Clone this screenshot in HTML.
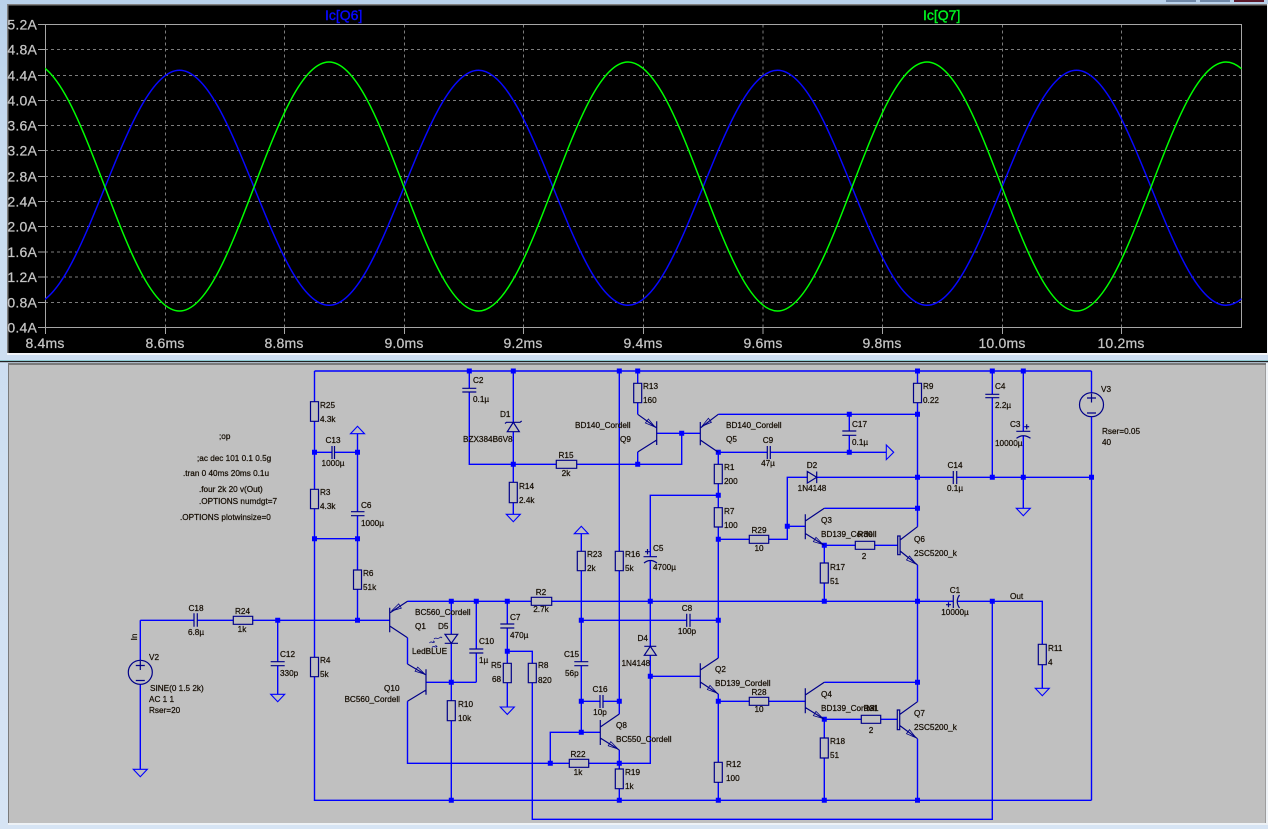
<!DOCTYPE html>
<html><head><meta charset="utf-8"><style>
html,body{margin:0;padding:0;background:#c5d9ee;width:1268px;height:829px;overflow:hidden}
svg{display:block;position:absolute;left:0;top:0}
.ax{font:14px "Liberation Sans",sans-serif;fill:#c4c4c4;stroke:#c4c4c4;stroke-width:.25px;letter-spacing:.2px}
.s text{font:8.2px "Liberation Sans",sans-serif;fill:#140c02;stroke:#140c02;stroke-width:.22px}
.m{text-anchor:middle}
.e{text-anchor:end}
</style></head><body>
<svg width="1268" height="829" viewBox="0 0 1268 829" xmlns="http://www.w3.org/2000/svg">
<defs>
<linearGradient id="bg" x1="0" y1="0" x2="0" y2="1"><stop offset="0" stop-color="#b9d1ea"/><stop offset=".2" stop-color="#c9dcf0"/><stop offset="1" stop-color="#d6e4f4"/></linearGradient>
<clipPath id="pc"><rect x="45" y="24" width="1196.5" height="304"/></clipPath>
</defs>
<rect width="1268" height="829" fill="url(#bg)"/>
<rect x="1166" y="0" width="30" height="2" fill="#7088a8"/><rect x="1200" y="0" width="30" height="2" fill="#7088a8"/><rect x="1234" y="0" width="30" height="2" fill="#5c1a2c"/>
<rect x="7" y="4" width="1261" height="351" fill="#f2f5f9"/>
<rect x="7" y="4" width="1260" height="349" fill="#808080"/>
<rect x="8.5" y="5.5" width="1258.5" height="347.5" fill="#000"/>
<!-- grid -->
<path d="M45 49.5H1241M45 75.5H1241M45 100.5H1241M45 125.5H1241M45 150.5H1241M45 176.5H1241M45 201.5H1241M45 226.5H1241M45 252H1241M45 277H1241M45 302.5H1241M165.5 24.5V327.5M284.5 24.5V327.5M404.5 24.5V327.5M523.5 24.5V327.5M643.5 24.5V327.5M763 24.5V327.5M882.5 24.5V327.5M1002.5 24.5V327.5M1121.5 24.5V327.5" stroke="#7c7c7c" stroke-width="1" stroke-dasharray="3 3" fill="none"/>
<rect x="45.5" y="24.5" width="1196" height="303" fill="none" stroke="#a6a6a6" stroke-width="1"/>
<path d="M38 24.5h7M38 49.5h7M38 75.5h7M38 100.5h7M38 125.5h7M38 150.5h7M38 176.5h7M38 201.5h7M38 226.5h7M38 252h7M38 277h7M38 302.5h7M38 327.5h7M45.5 327v7M165.5 327v7M284.5 327v7M404.5 327v7M523.5 327v7M643.5 327v7M763 327v7M882.5 327v7M1002.5 327v7M1121.5 327v7" stroke="#a6a6a6" fill="none"/>
<g clip-path="url(#pc)" fill="none" stroke-width="1.5">
<path stroke="#0808ff" d="M30 305.25c27.05 0 50.37 -57.3 74.75 -117.5c24.38 -60.2 47.7 -117.5 74.75 -117.5c27.05 0 50.37 57.3 74.75 117.5c24.38 60.2 47.7 117.5 74.75 117.5c27.05 0 50.37 -57.3 74.75 -117.5c24.38 -60.2 47.7 -117.5 74.75 -117.5c27.05 0 50.37 57.3 74.75 117.5c24.38 60.2 47.7 117.5 74.75 117.5c27.05 0 50.37 -57.3 74.75 -117.5c24.38 -60.2 47.7 -117.5 74.75 -117.5c27.05 0 50.37 57.3 74.75 117.5c24.38 60.2 47.7 117.5 74.75 117.5c27.05 0 50.37 -57.3 74.75 -117.5c24.38 -60.2 47.7 -117.5 74.75 -117.5c27.05 0 50.37 57.3 74.75 117.5c24.38 60.2 47.7 117.5 74.75 117.5c27.05 0 50.37 -57.3 74.75 -117.5"/>
<path stroke="#00ff00" d="M30 62c27.05 0 50.37 60.7 74.75 124.5c24.38 63.8 47.7 124.5 74.75 124.5c27.05 0 50.37 -60.7 74.75 -124.5c24.38 -63.8 47.7 -124.5 74.75 -124.5c27.05 0 50.37 60.7 74.75 124.5c24.38 63.8 47.7 124.5 74.75 124.5c27.05 0 50.37 -60.7 74.75 -124.5c24.38 -63.8 47.7 -124.5 74.75 -124.5c27.05 0 50.37 60.7 74.75 124.5c24.38 63.8 47.7 124.5 74.75 124.5c27.05 0 50.37 -60.7 74.75 -124.5c24.38 -63.8 47.7 -124.5 74.75 -124.5c27.05 0 50.37 60.7 74.75 124.5c24.38 63.8 47.7 124.5 74.75 124.5c27.05 0 50.37 -60.7 74.75 -124.5c24.38 -63.8 47.7 -124.5 74.75 -124.5c27.05 0 50.37 60.7 74.75 124.5"/>
</g>
<g class="ax e">
<text x="37" y="29.5">5.2A</text><text x="37" y="54.5">4.8A</text><text x="37" y="80.5">4.4A</text><text x="37" y="105.5">4.0A</text><text x="37" y="130.5">3.6A</text><text x="37" y="155.5">3.2A</text><text x="37" y="181.5">2.8A</text><text x="37" y="206.5">2.4A</text><text x="37" y="231.5">2.0A</text><text x="37" y="257">1.6A</text><text x="37" y="282">1.2A</text><text x="37" y="307.5">0.8A</text><text x="37" y="332.5">0.4A</text>
</g>
<g class="ax m">
<text x="45" y="348">8.4ms</text><text x="165" y="348">8.6ms</text><text x="284" y="348">8.8ms</text><text x="404" y="348">9.0ms</text><text x="523" y="348">9.2ms</text><text x="643" y="348">9.4ms</text><text x="763" y="348">9.6ms</text><text x="882" y="348">9.8ms</text><text x="1002" y="348">10.0ms</text><text x="1121" y="348">10.2ms</text>
</g>
<text x="325" y="20" style="font:14px 'Liberation Sans',sans-serif;fill:#0808ff;stroke:#0808ff;stroke-width:.4px">Ic[Q6]</text>
<text x="923" y="20" style="font:14px 'Liberation Sans',sans-serif;fill:#00f020;stroke:#00f020;stroke-width:.4px">Ic[Q7]</text>

<rect x="0" y="360" width="1268" height="1" fill="#8cc8d0"/><rect x="0" y="361" width="1268" height="1.2" fill="#222"/>
<rect x="8" y="363" width="1260" height="462" fill="#eef2f6"/>
<rect x="8" y="363" width="1258" height="460" fill="#7a7a7a"/>
<rect x="9" y="365" width="1256.5" height="458" fill="#c0c0c0"/>

<g style="filter:blur(.25px)" class="s">
<!-- wires -->
<path fill="none" stroke="#0000ff" stroke-width="1.4" d="M314.5 371H1091.5M314.5 371V401.7M314.5 421.3V489.3M314.5 508.7V657.3M314.5 676.7V800.3H1091.5
M314.5 452.3H332M334.5 452.3H357.5M357.5 433.7V511.7M357.5 515.7V570M357.5 589.3V620.3M314.5 538.7H357.5
M140.3 620.3H194M197.3 620.3H233.3M252.7 620.3H389.7M140.3 620.3V660.3M140.3 684.3V769.3M277.7 620.3V661.7M277.7 665.7V694.3
M407.5 601.3H531.3M551.7 601.3H953.3M957 601.3H1042.3V644.3M1042.3 664.7V688.3M407.5 637.7V664
M451.3 601.3V634.3M451.3 643.3V700.7M451.3 720.7V800.3M476.3 601.3V649M476.3 653V682.3M426 682.3H476.3
M507.3 601.3V624M507.3 628V663.3M507.3 682.7V707M507.3 651.3H532.3V663.3M532.3 682.7V819.3H992.3V601.3
M407.5 701.3V763.3H569.3M588.7 763.3H650.3V655.3M650.3 646.3V560M650.3 556.7V495.3H718.3M619.3 750V769M619.3 788.7V800.3
M550.3 763.3V732.3H600.3M581.3 533.7V551.3M581.3 570.7V661.7M581.3 665.7V732.3M581.3 620.3H686.7M690 620.3H718.3M581.3 701.3H600M603 701.3H619.3
M619.3 371V551.3M619.3 570.7V714M650.3 676.3H700.3
M718.3 452.3V464.3M718.3 483.7V507.7M718.3 527V658M718.3 694V762.3M718.3 782.3V800.3
M718.3 539.3H749.3M768.7 539.3H787.3V477.3H807M816.7 477.3H953.3M956.7 477.3H1091.5M787.3 526.3H805.3M718.3 701.3H749.3M768.7 701.3H805.3
M824.3 508.3H917.5M824.3 545.3H855.3M874.7 545.3H897.7M824.3 545.3V563M824.3 583V601.3M824.3 682.3H917.5M824.3 719.3H861.3M880.7 719.3H897.3M824.3 719.3V738M824.3 758V800.3
M917.5 371V383.3M917.5 402.7V526.7M917.5 565V701.7M917.5 738.7V800.3M718.3 414.3H917.5M718.3 452.3H767.3M770.3 452.3H886.3M849.3 414.3V431M849.3 435.3V452.3
M992.3 371V394.3M992.3 397.7V477.3M1023.3 371V431.3M1023.3 435.7V508.3M1091.5 371V392.7M1091.5 416.7V800.3
M656.7 433.3H700.3M681.7 433.3V464.3H576.7M556.3 464.3H469.3V392M469.3 388.3V371M637.7 371V383.3M637.7 402.7V414.3M637.7 452V464.3
M513.3 371V422.3M513.3 431.7V482.3M513.3 502.7V514.3"/>
<!-- junctions -->
<path fill="none" stroke="#0000ff" stroke-width="5" stroke-linecap="square" d="M469.3 371h0M513.3 371h0M619.3 371h0M637.7 371h0M917.5 371h0M992.3 371h0M1023.3 371h0M314.5 452.3h0M357.5 452.3h0M314.5 538.7h0M357.5 538.7h0M357.5 620.3h0M277.7 620.3h0M451.3 601.3h0M476.3 601.3h0M507.3 601.3h0M650.3 601.3h0M824.3 601.3h0M917.5 601.3h0M992.3 601.3h0M451.3 682.3h0M507.3 651.3h0M581.3 620.3h0M718.3 620.3h0M581.3 701.3h0M619.3 701.3h0M581.3 732.3h0M550.3 763.3h0M619.3 763.3h0M650.3 676.3h0M718.3 701.3h0M451.3 800.3h0M619.3 800.3h0M718.3 800.3h0M824.3 800.3h0M917.5 800.3h0M513.3 464.3h0M637.7 464.3h0M681.7 433.3h0M718.3 452.3h0M718.3 495.3h0M718.3 539.3h0M849.3 414.3h0M917.5 414.3h0M849.3 452.3h0M787.3 526.3h0M917.5 477.3h0M992.3 477.3h0M1023.3 477.3h0M1091.5 477.3h0M917.5 508.3h0M824.3 545.3h0M824.3 719.3h0M917.5 682.3h0"/>
<!-- grounds -->
<path fill="none" stroke="#0000ff" stroke-width="1.1" d="M133.3 769.3h14l-7 7.4zM270.7 694.3h14l-7 7.4zM500.3 707h14l-7 7.4zM506.3 514.3h14l-7 7.4zM1016.3 508.3h14l-7 7.4zM1035.3 688.3h14l-7 7.4zM350.5 433.7h14l-7 -7.4zM574.3 533.7h14l-7 -7.4zM886.3 445v14.6l7.4 -7.3z"/>
<!-- components -->
<path fill="none" stroke="#000088" stroke-width="1.2" d="M310.5 401.7h8v19.6h-8zM310.5 489.3h8v19.4h-8zM310.5 657.3h8v19.4h-8zM353.5 570h8v19.3h-8zM1038.3 644.3h8v20.4h-8zM528.3 663.3h8v19.4h-8zM503.3 663.3h8v19.4h-8zM447.3 700.7h8v20h-8zM615.3 769h8v19.7h-8zM714.3 762.3h8v20h-8zM615.3 551.3h8v19.4h-8zM577.3 551.3h8v19.4h-8zM714.3 464.3h8v19.4h-8zM714.3 507.7h8v19.3h-8zM633.7 383.3h8v19.4h-8zM913.5 383.3h8v19.4h-8zM509.3 482.3h8v20.4h-8zM820.3 563h8v20h-8zM820.3 738h8v20h-8z
M233.3 616.3h19.4v8h-19.4zM531.3 597.3h20.4v8h-20.4zM569.3 759.3h19.4v8h-19.4zM556.3 460.3h20.4v8h-20.4zM749.3 535.3h19.4v8h-19.4zM855.3 541.3h19.4v8h-19.4zM749.3 697.3h19.4v8h-19.4zM861.3 715.3h19.4v8h-19.4z
M194 613.3v13.4M197.3 613.3v13.4M332 446v13M334.5 446v13M351 511.7h13.5M351 515.7h13.5M270.7 661.7h14M270.7 665.7h14M469.3 649h14M469.3 653h14M500.3 624h14M500.3 628h14M574.3 661.7h14M574.3 665.7h14M600 695v13M603 695v13M686.7 613.7v13.2M690 613.7v13.2M767.3 446v13M770.3 446v13M842.3 431h14M842.3 435.3h14M462.3 388.3h14M462.3 392h14M985.3 394.3h14M985.3 397.7h14M953.3 471v13M956.7 471v13
M643.5 556.7h13.5M644 563q6.3 -5 13 0M1016.3 431.3h14M1016.5 438.3q6.8 -5 14 0M953.3 595v13M959.5 595q-4.5 6.5 0 13M645 551.7h5M647.5 549v5.4M1024.2 426.7h5M1026.7 424.2v5M946 604.7h5M948.5 602.2v5
M389.7 607.7v24.6M389.7 613L407.5 601.3M389.7 626L407.5 637.7M426 669.3v25.4M407.5 664L426 675M426 690L407.5 701.3M600.3 720v25M600.3 727L619.3 714M600.3 738L619.3 750M700.3 663.3v25M700.3 670L718.3 658M700.3 682L718.3 694
M656.7 421.3v23.7M637.7 414.3L656.7 428M656.7 440L637.7 452M700.3 422v23.3M718.3 414.3L700.3 428M700.3 440L718.3 452.3
M805.3 514.3v25M805.3 521L824.3 508.3M805.3 533.5L824.3 545.3M805.3 688.3v25M805.3 695L824.3 682.3M805.3 707.5L824.3 719.3
M897.7 536h2.4v18.7h-2.4zM900.1 540L917.5 526.7M900.1 551L917.5 565M897.3 710h2.4v19.7h-2.4zM899.7 714.5L917.5 701.7M899.7 725.5L917.5 738.7
M505 423.5L506.5 422.3H520L521.7 421M507.3 431.7h12l-6 -9.4zM644.3 646.3h12M644.3 655.3h12l-6 -9zM444.7 643.3h13.3M445 634.3h12.7l-6.4 9zM807.3 471.5v11.6l9.4 -5.8zM816.7 471.5v11.6"/>
<path fill="none" stroke="#000088" stroke-width=".8" d="M391.5 611L401.3 608.1L398.7 603.9zM425 674.3L415.1 671.3L417.7 667.1zM618 749L608.2 745.8L610.8 741.6zM717 693L707.4 689.6L710 685.4zM655 427L645.4 423L648.4 419zM702 426.3L711.4 422.3L708.4 418.3zM823 544.5L813.4 541.6L816 537.4zM823 718.5L813.4 715.6L816 711.4zM916 564L906.5 560L909.5 556zM916 737.7L906.5 733.7L909.5 729.7z
M429.5 643c2 -3 3 1 5 -1l-1.5 -1.2M432 647.5c2 -3 3 1 5 -1l-1.5 -1.2M434 639c2 -2.5 3 1 6 -1.5c1 -.8 1.5 -.4 2 .5"/>
<circle cx="140.3" cy="672.3" r="12" fill="none" stroke="#000088" stroke-width="1.2"/>
<circle cx="1091.5" cy="404.7" r="12" fill="none" stroke="#000088" stroke-width="1.2"/>
<path fill="none" stroke="#000088" stroke-width="1.2" d="M135.8 665.5h9M140.3 661v9M135.8 680.5h9M1087 398h9M1091.5 393.5v9M1087 413h9"/>
<!-- labels -->
<text x="320" y="408">R25</text><text x="320" y="422">4.3k</text>
<text x="333" y="443" class="m">C13</text><text x="333" y="466" class="m">1000µ</text>
<text x="320" y="495">R3</text><text x="320" y="509">4.3k</text>
<text x="361" y="508">C6</text><text x="361" y="526">1000µ</text>
<text x="363" y="576">R6</text><text x="363" y="590">51k</text>
<text x="320" y="663">R4</text><text x="320" y="677">5k</text>
<text x="196" y="611" class="m">C18</text><text x="196" y="635" class="m">6.8µ</text>
<text x="242.5" y="614" class="m">R24</text><text x="242" y="632" class="m">1k</text>
<text x="280" y="657">C12</text><text x="280" y="676">330p</text>
<text transform="translate(137,637) rotate(-90)" class="m">In</text>
<text x="149" y="660">V2</text>
<text x="150" y="691">SINE(0 1.5 2k)</text><text x="149" y="702">AC 1 1</text><text x="149" y="713">Rser=20</text>
<text x="399.5" y="691" class="e">Q10</text><text x="400" y="702" class="e">BC560_Cordell</text>
<text x="415" y="615">BC560_Cordell</text><text x="415" y="629">Q1</text><text x="438" y="629">D5</text><text x="412" y="654">LedBLUE</text>
<text x="479" y="644">C10</text><text x="479" y="663">1µ</text>
<text x="510" y="620">C7</text><text x="510" y="638">470µ</text>
<text x="491" y="668">R5</text><text x="492" y="682">68</text>
<text x="538" y="668">R8</text><text x="538" y="683">820</text>
<text x="541" y="595" class="m">R2</text><text x="541" y="612" class="m">2.7k</text>
<text x="564" y="657">C15</text><text x="565" y="676">56p</text>
<text x="600" y="692" class="m">C16</text><text x="600" y="715" class="m">10p</text>
<text x="687" y="611" class="m">C8</text><text x="687" y="634" class="m">100p</text>
<text x="637.5" y="641">D4</text><text x="621.5" y="666">1N4148</text>
<text x="715" y="672">Q2</text><text x="715" y="686">BD139_Cordell</text>
<text x="616" y="728">Q8</text><text x="616" y="742">BC550_Cordell</text>
<text x="578" y="757" class="m">R22</text><text x="578" y="775" class="m">1k</text>
<text x="625" y="775">R19</text><text x="625" y="789">1k</text>
<text x="458" y="707">R10</text><text x="458" y="721">10k</text>
<text x="726" y="767">R12</text><text x="726" y="781">100</text>
<text x="759" y="695" class="m">R28</text><text x="759" y="712" class="m">10</text>
<text x="821" y="697">Q4</text><text x="821" y="711">BD139_Cordell</text>
<text x="871" y="711" class="m">R31</text><text x="871" y="733" class="m">2</text>
<text x="914" y="716">Q7</text><text x="914" y="730">2SC5200_k</text>
<text x="830" y="744">R18</text><text x="830" y="758">51</text>
<text x="955" y="593" class="m">C1</text><text x="955" y="615" class="m">10000µ</text>
<text x="1010" y="599">Out</text>
<text x="1048" y="651">R11</text><text x="1048" y="665">4</text>
<text x="473" y="383">C2</text><text x="473" y="402">0.1µ</text>
<text x="500" y="417">D1</text><text x="463" y="442">BZX384B6V8</text>
<text x="566" y="458" class="m">R15</text><text x="566" y="476" class="m">2k</text>
<text x="519" y="489">R14</text><text x="519" y="503">2.4k</text>
<text x="575" y="428">BD140_Cordell</text><text x="620" y="442">Q9</text>
<text x="643" y="389">R13</text><text x="643" y="403">160</text>
<text x="726" y="428">BD140_Cordell</text><text x="726" y="442">Q5</text>
<text x="724" y="470">R1</text><text x="724" y="484">200</text>
<text x="724" y="514">R7</text><text x="724" y="528">100</text>
<text x="759" y="533" class="m">R29</text><text x="759" y="551" class="m">10</text>
<text x="587" y="557">R23</text><text x="587" y="571">2k</text>
<text x="625" y="557">R16</text><text x="625" y="571">5k</text>
<text x="653" y="551">C5</text><text x="653" y="570">4700µ</text>
<text x="923" y="389">R9</text><text x="923" y="403">0.22</text>
<text x="995" y="389">C4</text><text x="995" y="408">2.2µ</text>
<text x="1101" y="392">V3</text>
<text x="1010" y="427">C3</text><text x="995" y="446">10000µ</text>
<text x="1102" y="434">Rser=0.05</text><text x="1102" y="445">40</text>
<text x="852" y="427">C17</text><text x="852" y="445">0.1µ</text>
<text x="768" y="443" class="m">C9</text><text x="768" y="466" class="m">47µ</text>
<text x="812" y="468" class="m">D2</text><text x="812" y="491" class="m">1N4148</text>
<text x="955" y="468" class="m">C14</text><text x="955" y="491" class="m">0.1µ</text>
<text x="821" y="523">Q3</text><text x="821" y="537">BD139_Cordell</text>
<text x="865" y="537" class="m">R30</text><text x="864" y="559" class="m">2</text>
<text x="914" y="542">Q6</text><text x="914" y="556">2SC5200_k</text>
<text x="830" y="570">R17</text><text x="830" y="584">51</text>
<text x="219" y="439">;op</text>
<text x="197" y="461">;ac dec 101 0.1 0.5g</text>
<text x="183" y="476">.tran 0 40ms 20ms 0.1u</text>
<text x="199" y="492">.four 2k 20 v(Out)</text>
<text x="199" y="504">.OPTIONS numdgt=7</text>
<text x="180" y="520">.OPTIONS plotwinsize=0</text>
</g>
</svg>
</body></html>
